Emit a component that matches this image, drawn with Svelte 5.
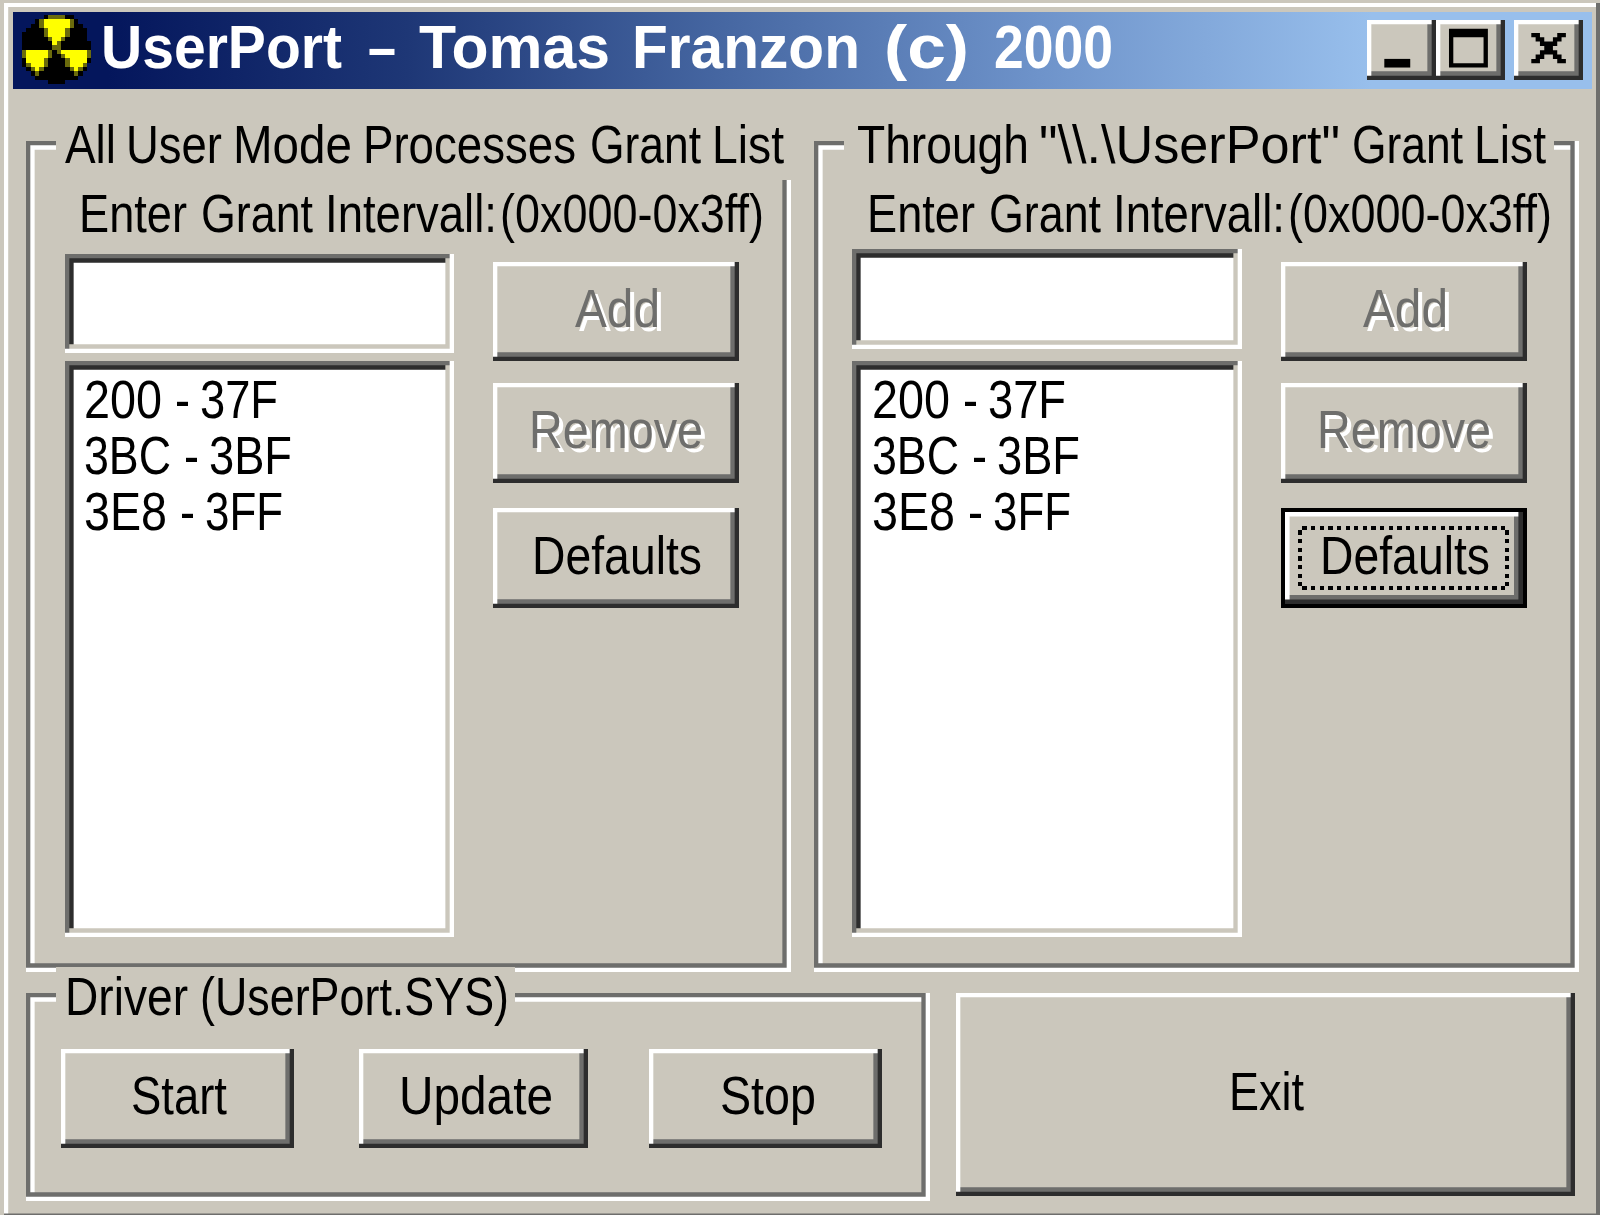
<script lang="ts">
  // [text, left, width] inside the caption's own box
  type Word = [string, number, number];

  type Panel = {
    id: string;
    legend: Word[];
    hint: Word[];
    focused: boolean;
  };

  // the dialog face is narrower than Liberation Sans
  const NARROW = 0.82;

  const hint: Word[] = [
    ['Enter', 53, 108],
    ['Grant', 175, 112],
    ['Intervall:', 299, 172],
    ['(0x000-0x3ff)', 474, 264]
  ];

  const panels: Panel[] = [
    {
      id: 'all',
      legend: [
        ['All', 9, 51],
        ['User', 70, 96],
        ['Mode', 177, 119],
        ['Processes', 307, 213],
        ['Grant', 534, 111],
        ['List', 656, 72]
      ],
      hint,
      focused: false
    },
    {
      id: 'through',
      legend: [
        ['Through', 13, 172],
        ['"\\\\.\\UserPort"', 195, 301],
        ['Grant', 508, 111],
        ['List', 630, 72]
      ],
      hint,
      focused: true
    }
  ];

  const title: Word[] = [
    ['UserPort', 10, 241],
    ['–', 277, 28],
    ['Tomas', 328, 191],
    ['Franzon', 541, 228],
    ['(c)', 793, 85],
    ['2000', 903, 119]
  ];

  const intervals: Word[][] = [
    [['200', 11, 78], ['-', 102, 15], ['37F', 127, 78]],
    [['3BC', 11, 87], ['-', 111, 15], ['3BF', 136, 83]],
    [['3E8', 11, 83], ['-', 107, 15], ['3FF', 132, 78]]
  ];

  const driverLegend: Word[] = [
    ['Driver', 9, 123],
    ['(UserPort.SYS)', 144, 309]
  ];

  const driverButtons: { id: string; label: Word[] }[] = [
    { id: 'start', label: [['Start', 70, 96]] },
    { id: 'update', label: [['Update', 40, 154]] },
    { id: 'stop', label: [['Stop', 71, 96]] }
  ];

  // 16x16 title icon: k = black, y = yellow, o = olive
  const ICON = [
    '.....kooookk....',
    '...koyyyyyyok...',
    '..kkoyyyyyyokk..',
    '.kkkkoyyyyokkkk.',
    'kkkkkoyyyyokkkk.',
    'kkkkkkoyyokkkkk.',
    'kkkkkkkyokkkkkkk',
    'kkkkkkkookkkkkkk',
    'oyyyyyokoyyyyyyo',
    'oyyyyyokkoyyyyyo',
    'kyyyyokkkkoyyyyk',
    'koyyyokkkkoyyyo.',
    '.koyokkkkkkoyok.',
    '..kokkkkkkkkok..',
    '...kkkkkkkkkk...',
    '......kkkk......'
  ];
  const INK: Record<string, string> = { k: '#000000', y: '#ffff00', o: '#6b6b0c' };
  const pixels = ICON.flatMap((row, y) =>
    [...row].map((c, x) => ({ x, y, fill: INK[c] })).filter((p) => p.fill)
  );
</script>

{#snippet caption(words: Word[], baseline: number, k = NARROW)}
  <svg class="caption">
    <text y={baseline} transform="scale({k} 1)">
      {#each words as [text, x, width]}
        <tspan x={x / k} textLength={width / k} lengthAdjust="spacingAndGlyphs">{text}</tspan>{' '}
      {/each}
    </text>
  </svg>
{/snippet}

<div class="window">
  <header class="titlebar">
    <svg class="icon" viewBox="0 0 16 16" shape-rendering="crispEdges">
      {#each pixels as p}
        <rect x={p.x} y={p.y} width="1" height="1" fill={p.fill} />
      {/each}
    </svg>
    <div class="title">{@render caption(title, 56, 0.92)}</div>
    <div class="controls">
      <button class="raised" aria-label="Minimize">
        <svg viewBox="0 0 16 14">
          <path d="M4 9h6v2H4z" />
        </svg>
      </button>
      <button class="raised" aria-label="Maximize">
        <svg viewBox="0 0 16 14">
          <path fill-rule="evenodd" d="M3 2h9v9H3zM4 4v6h7V4z" />
        </svg>
      </button>
      <button class="raised close" aria-label="Close">
        <svg viewBox="0 0 16 14">
          <path d="M4 3h2v1h1v1h2V4h1V3h2v1h-1v1h-1v1H9v1h1v1h1v1h1v1h-2V9H9V8H7v1H6v1H4V9h1V8h1V7h1V6H6V5H5V4H4z" />
        </svg>
      </button>
    </div>
  </header>

  <div class="panels">
    {#each panels as panel (panel.id)}
      <section class="group {panel.id}">
        <div class="legend">{@render caption(panel.legend, 49.3)}</div>
        <div class="hint">{@render caption(panel.hint, 52.3)}</div>
        <div class="body">
          <div class="fields">
            <input class="sunken edit" aria-label="Interval" />
            <div class="sunken list">
              {#each intervals as words}
                <div class="item">{@render caption(words, 48)}</div>
              {/each}
            </div>
          </div>
          <div class="actions">
            <button class="raised" disabled>{@render caption([['Add', 82, 85]], 65.5)}</button>
            <button class="raised" disabled>{@render caption([['Remove', 36, 174]], 65.5)}</button>
            <button class="raised last" class:focused={panel.focused}>
              {@render caption([['Defaults', 39, 170]], 65.7)}
            </button>
          </div>
        </div>
      </section>
    {/each}
  </div>

  <div class="bottom">
    <section class="group driver">
      <div class="legend">{@render caption(driverLegend, 48)}</div>
      <div class="driver-buttons">
        {#each driverButtons as b (b.id)}
          <button class="raised {b.id}">{@render caption(b.label, 65)}</button>
        {/each}
      </div>
    </section>
    <button class="raised exit">{@render caption([['Exit', 273, 75]], 117.5)}</button>
  </div>
</div>

<style>
  :global(body) {
    background: #cbc7bc;
  }

  .window {
    --u: 4.32px;
    --face: #cbc7bc;
    --shadow: #6e6e6c;
    --dark: #2d2d2d;
    box-sizing: border-box;
    width: 1596px;
    height: 1212px;
    margin: 3px 0 0 4px;
    padding: 8.6px 8px 0 9px;
    background: var(--face);
    box-shadow:
      inset -4px -1.5px 0 var(--shadow),
      inset 4.2px 4px 0 #fff;
    overflow: hidden;
    font-family: 'Liberation Sans', Arial, sans-serif;
    font-size: 54px;
    color: #000;
  }

  .caption {
    display: block;
    width: 100%;
    height: 100%;
    overflow: visible;
    fill: currentColor;
    /* every word has its own x, so the blanks take no room */
    word-spacing: -0.278em;
  }

  button {
    flex: none;
    padding: 0;
    border: 0;
    font: inherit;
    color: inherit;
  }
  button:disabled {
    color: var(--shadow);
  }
  button:disabled .caption {
    filter: drop-shadow(var(--u) var(--u) 0 #fff);
  }

  .raised {
    background: var(--face);
    box-shadow:
      inset calc(var(--u) * -1) calc(var(--u) * -1) 0 var(--dark),
      inset var(--u) var(--u) 0 #fff,
      inset calc(var(--u) * -2) calc(var(--u) * -2) 0 var(--shadow);
  }
  .sunken {
    box-sizing: border-box;
    background: #fff;
    box-shadow:
      inset calc(var(--u) * -1) calc(var(--u) * -1) 0 #fff,
      inset var(--u) var(--u) 0 var(--shadow),
      inset calc(var(--u) * -2) calc(var(--u) * -2) 0 var(--face),
      inset calc(var(--u) * 2) calc(var(--u) * 2) 0 var(--dark);
  }
  .group {
    flex: none;
    box-shadow:
      inset calc(var(--u) * -1) calc(var(--u) * -1) 0 #fff,
      inset var(--u) var(--u) 0 var(--shadow),
      inset calc(var(--u) * -2) calc(var(--u) * -2) 0 var(--shadow),
      inset calc(var(--u) * 2) calc(var(--u) * 2) 0 #fff;
  }

  .titlebar {
    display: flex;
    width: 1579px;
    height: 77px;
    background: linear-gradient(to right, #04165c 0, #04165c 6%, #1e3776 25%, #4667a2 45%, #6e93ca 65%, #98bfec 86%, #98bfec 100%);
  }
  .icon {
    flex: none;
    width: 69.2px;
    height: 69.2px;
    margin: 3.2px 0 0 8.6px;
  }
  .title {
    flex: 1;
    color: #fff;
    font-size: 61px;
    font-weight: bold;
  }
  .controls {
    display: flex;
    padding: 8px 9px 0 0;
  }
  .controls button {
    width: 69.2px;
    height: 60.5px;
  }
  .controls svg {
    display: block;
    width: 69.2px;
    height: 60.5px;
  }
  .controls .close {
    margin-left: 8.6px;
  }

  .panels {
    display: flex;
    gap: 22.5px;
    height: 830.5px;
    margin: 52.6px 0 0 13px;
  }
  .panels .group {
    width: 765px;
  }
  .legend {
    height: 66px;
    margin: -27px 0 0 30px;
    background: var(--face);
  }
  .all .legend {
    width: 735px;
  }
  .through .legend {
    width: 710px;
  }
  .hint {
    height: 65px;
  }
  .body {
    display: flex;
    gap: 39px;
    padding-left: 38.5px;
  }
  .fields {
    display: flex;
    flex-direction: column;
    width: 389.5px;
    height: 692px;
    padding-top: 8.5px;
    box-sizing: border-box;
  }
  .through .fields {
    padding-top: 4px;
  }
  .edit {
    height: 99.5px;
    padding: 0 16px;
    border: 0;
    outline: 0;
    font: inherit;
  }
  .list {
    height: 576px;
    margin-top: auto;
    padding: 8.6px;
  }
  .item {
    height: 56.2px;
  }
  .actions {
    display: flex;
    flex-direction: column;
    gap: 22px;
    padding-top: 17px;
  }
  .actions button {
    width: 246px;
    height: 99.3px;
  }
  .actions .last {
    margin-top: 3.5px;
  }
  .focused {
    position: relative;
    box-shadow:
      inset 0 0 0 4px #000,
      inset -8.6px -8.6px 0 var(--dark),
      inset 8.6px 8.6px 0 #fff,
      inset -13px -13px 0 var(--shadow);
  }
  /* keyboard focus rectangle over the button face */
  .focused::after {
    content: '';
    position: absolute;
    inset: 17.3px 17.3px 17.3px 17.3px;
    background:
      repeating-linear-gradient(to right, transparent 0 4.32px, #000 4.32px 8.64px) top / 100% 4.32px no-repeat,
      repeating-linear-gradient(to right, transparent 0 4.32px, #000 4.32px 8.64px) bottom / 100% 4.32px no-repeat,
      repeating-linear-gradient(to bottom, transparent 0 4.32px, #000 4.32px 8.64px) left / 4.32px 100% no-repeat,
      repeating-linear-gradient(to bottom, transparent 0 4.32px, #000 4.32px 8.64px) right / 4.32px 100% no-repeat;
  }

  .bottom {
    display: flex;
    gap: 26px;
    margin: 21.5px 0 0 13px;
  }
  .driver {
    width: 904px;
    height: 208px;
  }
  .driver .legend {
    width: 459px;
    height: 70px;
    margin-top: -26px;
  }
  .driver-buttons {
    display: flex;
    padding: 12px 0 0 35px;
  }
  .driver-buttons button {
    width: 233px;
    height: 99px;
  }
  .driver-buttons .update {
    width: 229.5px;
    margin: 0 61px 0 64.5px;
  }
  .exit {
    width: 619px;
    height: 203px;
  }
</style>
